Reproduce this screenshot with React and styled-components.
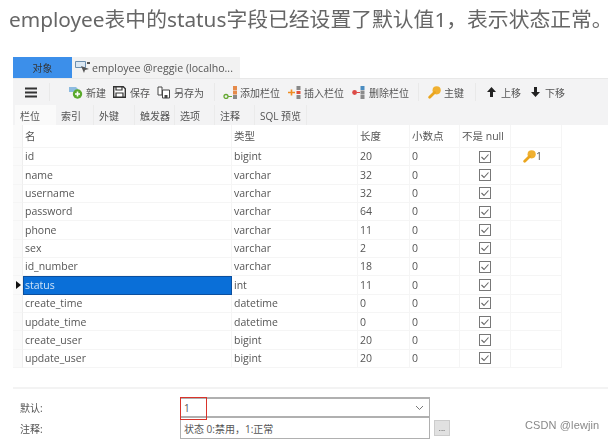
import React from "react";
import styled, { createGlobalStyle } from "styled-components";

const Global = createGlobalStyle`
  html, body { margin: 0; padding: 0; background: #fff; }
  body { width: 613px; height: 441px; overflow: hidden; font-family: "Open Sans", "Noto Sans CJK SC", sans-serif; }
`;

const Page = styled.div`
  width: 613px; height: 441px; position: relative; overflow: hidden; filter: blur(0.4px);
  padding: 5px 5px 0 13px; box-sizing: border-box; display: flex; flex-direction: column;
`;
const Heading = styled.h1`
  margin: 0 0 0 -4px; height: 52px; font: 400 20.8px/28px "Noto Sans", "Noto Sans CJK SC", sans-serif;
  color: #666; white-space: nowrap;
`;
const TabStrip = styled.div`display: flex; height: 21px; border-bottom: 1px solid #e8e8e8; box-sizing: content-box;`;
const ObjectTab = styled.div`
  width: 59px; background: #3c8fea; color: #333; font-size: 10px; display: flex; align-items: center; justify-content: center;
`;
const DocTab = styled.div`
  width: 168px; background: #f2f2f2; color: #555; font-size: 10.6px; font-weight: 500; display: flex; align-items: center; gap: 1px; padding-left: 3px; box-sizing: border-box; white-space: nowrap;
`;
const Toolbar = styled.div`
  height: 26px; background: #f3f3f4; display: flex; align-items: center; font-size: 10px; color: #555; white-space: nowrap;
`;
const Tool = styled.div`display: flex; align-items: center; gap: ${p => p.$g ?? 3}px; margin-left: ${p => p.$gap ?? 6}px;`;
const Sep = styled.div`width: 1px; height: 18px; background: #e9e9e9; margin-left: ${p => p.$gap ?? 8}px;`;
const SubTabs = styled.div`display: flex; height: 20px; background: #f3f3f4; align-items: stretch; padding-left: 2px; font-size: 10px; color: #555;`;
const SubTab = styled.div`
  width: ${p => p.$w}px; display: flex; align-items: center; padding-left: 5px; box-sizing: border-box; white-space: nowrap;
  background: ${p => p.$active ? "#fafafa" : "#f3f3f4"};
  border-right: 1px solid ${p => p.$active ? "transparent" : "#ebebeb"};
`;
const Table = styled.div`display: flex; flex-direction: column; height: 262px; border-bottom: 2px solid #f3f3f3; box-sizing: content-box;`;
const cols = "10px 209px 126px 52px 50px 51px 51px";
const Row = styled.div`
  display: grid; grid-template-columns: ${cols}; height: ${p => p.$h || 18.35}px; font-size: 10.5px; color: #555; width: 549px; line-height: 1;
`;
const Cell = styled.div`
  display: flex; align-items: center; padding-left: ${p => p.$center ? 0 : p.$pad ?? 2}px; overflow: hidden; box-sizing: border-box; white-space: nowrap;
  justify-content: ${p => p.$center ? "center" : "flex-start"};
  border-right: 1px solid #f5f5f5; border-bottom: 1px solid #f5f5f5;
  background: ${p => p.$sel ? "#0a6fd8" : "#fff"};
  color: ${p => p.$sel ? "#cfe3f7" : "inherit"};
  outline: ${p => p.$sel ? "1px solid #0b4f9e" : "none"}; outline-offset: -1px;
`;
const Gutter = styled.div`
  background: #fafafa; border-right: 1px solid #eeeeee; border-bottom: 1px solid #f5f5f5; display: flex; align-items: center; justify-content: flex-end; padding-right: 1px;
`;
const Arrow = styled.div`width: 0; height: 0; border-left: 5px solid #111; border-top: 4px solid transparent; border-bottom: 4px solid transparent;`;
const Bottom = styled.div`display: grid; grid-template-columns: 167px 250px 1fr; grid-template-rows: 20px 22px; padding-top: 8px; font-size: 10px; color: #555; align-items: center;`;
const Label = styled.div`padding-left: 7px;`;
const Field = styled.div`
  position: relative; height: ${p => p.$h}px; border: 1px solid #b0b0b0; border-top-width: ${p => p.$top ?? 1}px; box-sizing: border-box; background: #fff; display: flex; align-items: center; padding-left: 3px; font-size: 10px; justify-content: space-between; padding-right: 5px;
`;
const RedBox = styled.div`position: absolute; z-index: 1; left: -1px; top: -2px; width: 27px; height: 23px; border: 1.5px solid #d9342b; box-sizing: border-box;`;
const MoreCell = styled.div`display: flex; align-items: center; padding-left: 4px;`;
const More = styled.div`width: 16px; height: 16px; background: #e1e1e1; border: 1px solid #ccc; box-sizing: border-box; font-size: 8px; line-height: 13px; text-align: center; color: #444;`;
const Mark = styled.div`position: absolute; left: 525px; top: 418px; font: 400 11px/14px "Liberation Sans", sans-serif; color: #888; white-space: nowrap; letter-spacing: .12px;`;

const Menu = () => (<svg width="12" height="11" viewBox="0 0 12 11"><path d="M0 1.5h12M0 5.5h12M0 9.5h12" stroke="#333" strokeWidth="2"/></svg>);
const Key = ({ s = 13 }) => (<svg width={s} height={s} viewBox="0 0 14 14"><circle cx="9.3" cy="4.7" r="4.4" fill="#f0b030"/><path d="M7 7L1.8 12.2" stroke="#eaa51e" strokeWidth="3" strokeLinecap="round"/></svg>);
const Add = () => (<svg width="15" height="13" viewBox="0 0 15 13"><path d="M0 1h7l2 2v3H0z" fill="#8dbbe0"/><circle cx="8.5" cy="8" r="4.7" fill="#5aaa2c"/><path d="M8.5 5.5v5M6 8h5" stroke="#fff" strokeWidth="1.6"/></svg>);
const Save = () => (<svg width="13" height="12" viewBox="0 0 13 12"><path d="M.7.7h9.6l2 2v8.6H.7z" fill="#fff" stroke="#333" strokeWidth="1.4"/><path d="M3 1v3h6V1M3 11V7h7v4" fill="none" stroke="#333" strokeWidth="1.2"/></svg>);
const SaveAs = () => (<svg width="14" height="13" viewBox="0 0 14 13"><path d="M1 1h4v8H1zM5.5 4h7v8h-7z" fill="#fff" stroke="#444"/><path d="M7.5 9h3v3h-3z" fill="#444"/></svg>);
const AddCol = () => (<svg width="15" height="13" viewBox="0 0 15 13"><path d="M10 0h4v4h-4zM10 4.5h4v4h-4z" fill="#e58a4a"/><path d="M10 9h4v4h-4z" fill="#888"/><circle cx="3" cy="10.5" r="2" fill="none" stroke="#65a832" strokeWidth="1.3"/><path d="M5 10.5h4" stroke="#65a832"/></svg>);
const InsCol = () => (<svg width="13" height="13" viewBox="0 0 13 13"><path d="M8.5 0h4v4h-4z" fill="#888"/><path d="M8.5 5h4v3h-4z" fill="#e0503a"/><path d="M8.5 9h4v4h-4z" fill="#888"/><path d="M0 6.5h7M3.5 3.5v6" stroke="#ef8c22" strokeWidth="1.6"/></svg>);
const DelCol = () => (<svg width="13" height="13" viewBox="0 0 13 13"><path d="M8.5 0h4v4h-4z" fill="#4a8cc0"/><path d="M8.5 4.5h4v4h-4zM8.5 9h4v4h-4z" fill="#8a8a8a"/><circle cx="2.6" cy="6.5" r="2.4" fill="#dc4a46"/><path d="M5 6.5h3" stroke="#dc4a46"/></svg>);
const Up = () => (<svg width="9" height="10" viewBox="0 0 9 10"><path d="M4.5 0L9 5H6v5H3V5H0z" fill="#222"/></svg>);
const Down = () => (<svg width="9" height="10" viewBox="0 0 9 10"><path d="M4.5 10L9 5H6V0H3v5H0z" fill="#222"/></svg>);
const Check = () => (<svg width="12" height="12" viewBox="0 0 12 12"><rect x=".5" y=".5" width="11" height="11" fill="#fff" stroke="#777"/><path d="M2.5 6l2.5 2.5 4.5-5" fill="none" stroke="#666" strokeWidth="1.1"/></svg>);
const TableIcon = () => (<svg width="16" height="13" viewBox="0 0 16 13"><path d="M.5.5h10v6H.5z" fill="#dbe7f2" stroke="#6d8fae"/><path d="M6 5l3 7 1-3 4-1z" fill="#555"/><path d="M12 2h3" stroke="#555" strokeWidth="2"/></svg>);
const Chevron = () => (<svg width="9" height="6" viewBox="0 0 9 6"><path d="M1 1l3.5 3.5L8 1" fill="none" stroke="#777"/></svg>);

const rows = [
  ["id", "bigint", "20", "0", true],
  ["name", "varchar", "32", "0"],
  ["username", "varchar", "32", "0"],
  ["password", "varchar", "64", "0"],
  ["phone", "varchar", "11", "0"],
  ["sex", "varchar", "2", "0"],
  ["id_number", "varchar", "18", "0"],
  ["status", "int", "11", "0"],
  ["create_time", "datetime", "0", "0"],
  ["update_time", "datetime", "0", "0"],
  ["create_user", "bigint", "20", "0"],
  ["update_user", "bigint", "20", "0"],
];

const tabs = [["栏位", 41, true], ["索引", 38], ["外键", 41], ["触发器", 40], ["选项", 40], ["注释", 40], ["SQL 预览", 52]];

export default function App() {
  return (
    <Page>
      <Global />
      <Heading>employee表中的status字段已经设置了默认值1，表示状态正常。</Heading>
      <TabStrip>
        <ObjectTab>对象</ObjectTab>
        <DocTab><TableIcon />employee @reggie (localho...</DocTab>
      </TabStrip>
      <Toolbar>
        <Tool $gap={12}><Menu /></Tool>
        <Sep $gap={12} />
        <Tool $gap={19} $g={2}><Add />新建</Tool>
        <Tool $gap={7} $g={4}><Save />保存</Tool>
        <Tool $gap={7} $g={3}><SaveAs />另存为</Tool>
        <Sep $gap={10} />
        <Tool $gap={8} $g={2}><AddCol />添加栏位</Tool>
        <Tool $gap={8} $g={3}><InsCol />插入栏位</Tool>
        <Tool $gap={8} $g={4}><DelCol />删除栏位</Tool>
        <Sep $gap={9} />
        <Tool $gap={9} $g={3}><Key />主键</Tool>
        <Sep $gap={11} />
        <Tool $gap={11} $g={5}><Up />上移</Tool>
        <Tool $gap={10} $g={5}><Down />下移</Tool>
      </Toolbar>
      <SubTabs>
        {tabs.map(([t, w, a]) => <SubTab key={t} $w={w} $active={a}>{t}</SubTab>)}
      </SubTabs>
      <Table>
        <Row $h={23}>
          <Gutter />
          <Cell>名</Cell><Cell>类型</Cell><Cell>长度</Cell><Cell>小数点</Cell><Cell>不是 null</Cell><Cell />
        </Row>
        {rows.map(([n, t, l, d, k]) => (
          <Row key={n}>
            <Gutter>{n === "status" && <Arrow />}</Gutter>
            <Cell $sel={n === "status"}>{n}</Cell>
            <Cell>{t}</Cell>
            <Cell>{l}</Cell>
            <Cell>{d}</Cell>
            <Cell $center><Check /></Cell>
            <Cell $pad={12}>{k && <><Key />1</>}</Cell>
          </Row>
        ))}
      </Table>
      <Bottom>
        <Label>默认:</Label>
        <Field $h={20} $top={2}>1<Chevron /><RedBox /></Field>
        <div />
        <Label>注释:</Label>
        <Field $h={22}>状态 0:禁用，1:正常</Field>
        <MoreCell><More>...</More></MoreCell>
      </Bottom>
      <Mark>CSDN @lewjin</Mark>
    </Page>
  );
}
